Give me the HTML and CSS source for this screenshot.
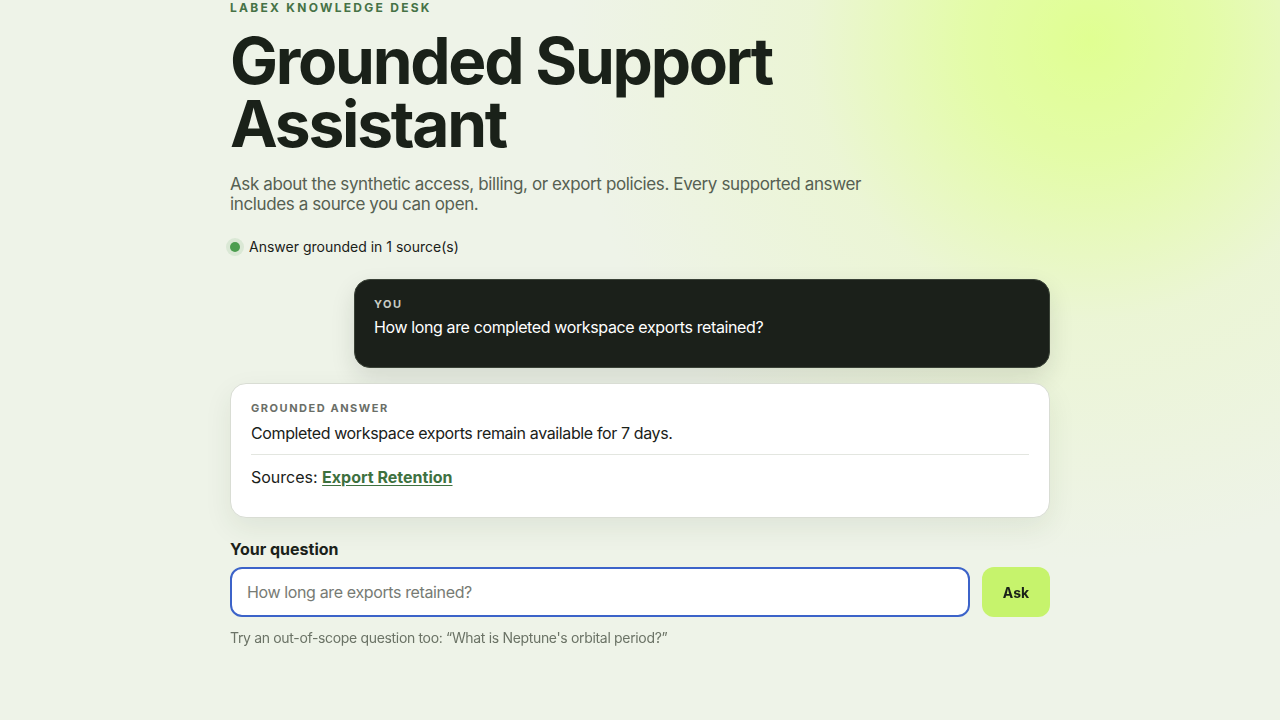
FILE: index.html
```html
<!DOCTYPE html>
<html lang="en">
<head>
<meta charset="utf-8">
<title>Grounded Support Assistant</title>
<link rel="stylesheet" href="styles.css">
</head>
<body>
<main class="page">
  <p class="eyebrow">Labex Knowledge Desk</p>
  <h1 class="title">Grounded Support Assistant</h1>
  <p class="lede">Ask about the synthetic access, billing, or export policies. Every supported answer includes a source you can open.</p>
  <div class="status"><span class="dot"></span><span>Answer grounded in 1 source(s)</span></div>
  <section class="thread">
    <div class="msg user">
      <div class="msg-label">You</div>
      <p class="msg-text">How long are completed workspace exports retained?</p>
    </div>
    <div class="msg answer">
      <div class="msg-label">Grounded answer</div>
      <p class="msg-text">Completed workspace exports remain available for 7 days.</p>
      <p class="sources">Sources: <a href="#export-retention">Export Retention</a></p>
    </div>
  </section>
  <form class="ask" onsubmit="return false;">
    <label class="ask-label" for="q">Your question</label>
    <div class="ask-row">
      <input id="q" class="ask-input" type="text" placeholder="How long are exports retained?" autofocus>
      <button class="ask-btn" type="submit">Ask</button>
    </div>
    <p class="hint">Try an out-of-scope question too: “What is Neptune's orbital period?”</p>
  </form>
</main>
</body>
</html>
```

FILE: styles.css
```css
* { box-sizing: border-box; }
html, body { margin: 0; height: 100%; }
body {
  font-family: Inter, "Noto Sans", "Liberation Sans", sans-serif;
  color: #1a2119;
  background:
    radial-gradient(circle at 1090px 40px, #e0ff92 0, rgba(224,255,146,0.75) 120px, rgba(232,248,190,0.45) 280px, rgba(238,243,232,0) 520px),
    #eef3e8;
  background-attachment: fixed;
}
.page {
  width: 820px;
  margin: 0 auto;
  padding-top: 1px;
}
.eyebrow {
  margin: 0;
  font-size: 12px;
  font-weight: 700;
  letter-spacing: 0.19em;
  text-transform: uppercase;
  color: #467246;
  line-height: 14px;
}
.title {
  margin: 14px 0 0;
  font-size: 64px;
  font-weight: 700;
  line-height: 63px;
  letter-spacing: -0.035em;
  color: #1a2119;
  max-width: 600px;
}
.lede {
  margin: 19px 0 0;
  max-width: 640px;
  font-size: 17px;
  line-height: 20px;
  letter-spacing: -0.38px;
  color: #566052;
}
.status {
  display: flex;
  align-items: center;
  gap: 9px;
  margin-top: 24px;
  font-size: 14px;
  color: #1a2119;
}
.dot {
  width: 10px;
  height: 10px;
  border-radius: 50%;
  background: #4c9d4f;
  box-shadow: 0 0 0 4px rgba(76,157,79,0.12);
}
.thread {
  display: flex;
  flex-direction: column;
  gap: 15px;
  margin-top: 24px;
}
.msg {
  border-radius: 16px;
  padding: 18px 20px 20px;
}
.msg-label {
  font-size: 11px;
  font-weight: 700;
  letter-spacing: 0.14em;
  text-transform: uppercase;
  line-height: 13px;
}
.msg-text {
  margin: 5px 0 0;
  font-size: 16px;
  line-height: 22px;
  letter-spacing: -0.38px;
}
.user {
  align-self: flex-end;
  width: 696px;
  min-height: 89px;
  padding-left: 19px;
  background: #1b201a;
  color: #fff;
  border: 1px solid #3a4237;
  box-shadow: 0 10px 24px rgba(27,32,26,0.12);
}
.user .msg-label { color: #c7ccc4; }
.answer {
  background: #fff;
  border: 1px solid #d9ddd4;
  box-shadow: 0 10px 28px rgba(40,60,30,0.08);
  padding-bottom: 29px;
}
.answer .msg-label { color: #6a6e67; }
.answer .msg-text { margin-top: 7px; padding-bottom: 10px; border-bottom: 1px solid #e3e6e0; }
.sources {
  margin: 11px 0 0;
  font-size: 16px;
  line-height: 22px;
}
.sources a {
  color: #3e713f;
  font-weight: 700;
  text-decoration: underline;
  text-underline-offset: 2px;
}
.ask { margin-top: 21px; }
.ask-label {
  display: block;
  font-size: 16px;
  font-weight: 700;
  line-height: 20px;
}
.ask-row {
  display: flex;
  gap: 12px;
  margin-top: 8px;
}
.ask-input {
  flex: 1;
  height: 50px;
  border: 2px solid #3c63c9;
  border-radius: 12px;
  background: #fff;
  padding: 0 15px;
  font: inherit;
  font-size: 16px;
  letter-spacing: -0.37px;
  color: #1a2119;
  outline: none;
}
.ask-input::placeholder { color: #777b74; }
.ask-btn {
  width: 68px;
  height: 50px;
  border: 0;
  border-radius: 12px;
  background: #c6f36c;
  font: inherit;
  font-size: 14px;
  font-weight: 700;
  color: #1a2119;
}
.hint {
  margin: 12px 0 0;
  font-size: 14px;
  line-height: 18px;
  letter-spacing: -0.33px;
  color: #6b7366;
}
```
